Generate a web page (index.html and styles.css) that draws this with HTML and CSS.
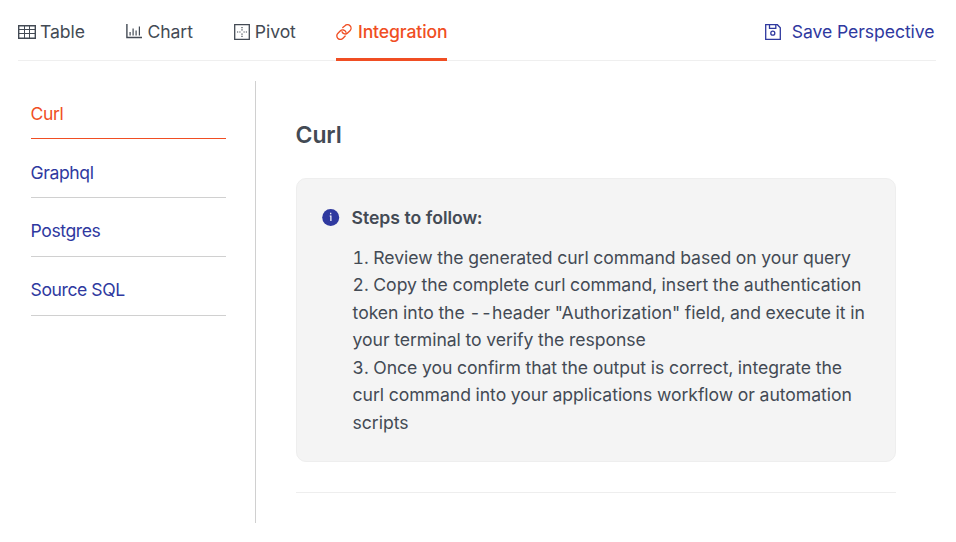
FILE: index.html
```html
<!DOCTYPE html>
<html lang="en">
<head>
<meta charset="utf-8">
<title>Integration</title>
<link rel="stylesheet" href="styles.css">
</head>
<body>
<header class="topbar">
  <nav class="tabs">
    <a class="tab tab-table"><svg width="18" height="14" viewBox="0 0 18 14" fill="none" stroke="currentColor"><path stroke-width="1.4" d="M.7.7h16.6v12.6H.7z"/><path d="M1 4.5h16M1 8.5h16M6.5 1v12M11.5 1v12"/></svg><span>Table</span></a>
    <a class="tab tab-chart"><svg width="16" height="15" viewBox="0 0 16 15" fill="none" stroke="currentColor"><path stroke-width="1.4" d="M.9 0v13.5H16"/><path stroke-width="1.2" d="M4.1 11.5V8M7.1 11.5V4.5M10.1 11.5V6.5M13.4 11.5V2.5"/></svg><span>Chart</span></a>
    <a class="tab tab-pivot"><svg width="16" height="16" viewBox="0 0 16 16" fill="none" stroke="currentColor"><path stroke-width="1.3" d="M.7.7h14.6v14.6H.7z"/><path stroke-width="1.2" d="M7.4 3.6h1.2M7.4 5.9h1.2M7.4 10.1h1.2M7.4 12.4h1.2M3 8h1.2M5.3 8h1.2M9.5 8h1.2M11.8 8H13"/></svg><span>Pivot</span></a>
    <a class="tab tab-integration active"><svg width="16" height="16" viewBox="0 0 16 16" fill="none" stroke="currentColor" stroke-width="1.35" stroke-linecap="round"><path d="M6.8 3.5 9 1.7a3.5 3.5 0 0 1 5 5L11.6 9a3.4 3.4 0 0 1-5.6-1.2M9.2 12.1 7 14.3a3.5 3.5 0 0 1-5.2-4.9L4.2 7A3.5 3.5 0 0 1 10 8.2"/></svg><span>Integration</span></a>
  </nav>
  <a class="save"><svg width="16" height="16" viewBox="0 0 16 16" fill="none" stroke="currentColor" stroke-width="1.3"><path d="M.7.7h11.7l2.9 3v11.6H.7zM4.5.7v3.6h6.3V.7"/><circle cx="7.8" cy="9.2" r="2"/></svg><span>Save Perspective</span></a>
</header>
<main class="layout">
  <nav class="sidebar">
    <a class="item selected">Curl</a>
    <a class="item second">Graphql</a>
    <a class="item">Postgres</a>
    <a class="item">Source SQL</a>
  </nav>
  <section class="content">
    <h1>Curl</h1>
    <div class="steps">
      <svg class="info" width="18" height="18" viewBox="0 0 18 18"><circle cx="8.7" cy="9.5" r="8.5" fill="#2f399f"/><path d="M7.7 8h1.2v5M8.7 4.8v1.4" fill="none" stroke="#fff" stroke-width="1.2"/></svg>
      <div>
        <h2>Steps to follow:</h2>
        <div class="step-list">
          <div>1. Review the generated curl command based on your query</div>
          <div>2. Copy the complete curl command, insert the authentication<br>token into the --header "Authorization" field, and execute it in<br>your terminal to verify the response</div>
          <div>3. Once you confirm that the output is correct, integrate the<br>curl command into your applications workflow or automation<br>scripts</div>
        </div>
      </div>
    </div>
    <hr>
  </section>
</main>
</body>
</html>
```
FILE: styles.css
```css
* { box-sizing: border-box; }
body {
  margin: 0;
  padding: 0 20px 0 18px;
  background: #fff;
  color: #434a54;
  font: 17.6px/27.5px Inter, "Liberation Sans", sans-serif;
  font-variant-numeric: tabular-nums;
  letter-spacing: -0.08px;
}
.topbar {
  display: flex;
  justify-content: space-between;
  height: 61px;
  border-bottom: 1px solid #efefef;
}
.tabs { display: flex; gap: 41px; }
.tab, .save {
  display: flex;
  align-items: center;
  gap: 5px;
  height: 61px;
  padding-top: 5px;
  white-space: nowrap;
  border-bottom: 3px solid transparent;
}
.tab svg, .save svg { flex: none; }
.tab-table { gap: 4px; }
.tab-chart svg { margin-right: 0.6px; }
.tab-integration { margin-left: -0.6px; font-weight: 500; letter-spacing: -0.12px; gap: 5.8px; }
.tab.active { color: #f04e23; border-bottom-color: #f04e23; }
.save { gap: 10.5px; padding-right: 1.5px; color: #2f399f; letter-spacing: -0.06px; }
.save svg { margin-left: 1px; }
.layout { display: flex; margin-top: 20px; height: 442px; }
.sidebar {
  width: 238px;
  padding: 0 29px 0 12.6px;
  border-right: 1px solid #d0d0d0;
  letter-spacing: -0.42px;
}
.item {
  display: block;
  height: 59px;
  padding-top: 19px;
  color: #2f399f;
  border-bottom: 1px solid #d0d0d0;
}
.item.second { padding-top: 20px; }
.item.selected { height: 58px; color: #f04e23; border-bottom-color: #f04e23; }
.content { width: 640px; padding: 39px 0 0 40px; }
h1 { margin: 0 0 27px -0.4px; font-size: 23px; line-height: 31px; font-weight: 600; letter-spacing: -0.15px; }
.steps {
  display: flex;
  gap: 11.5px;
  height: 284px;
  padding: 25px 0 0 25px;
  background: #f4f4f4;
  border: 1px solid #eee;
  border-radius: 10px;
}
.info { flex: none; margin-top: 4px; }
h2 { margin: 0 0 12.5px; font-size: 17.6px; line-height: 27px; font-weight: 600; letter-spacing: -0.04px; }
.step-list {
  padding-left: 1.1px;
  white-space: nowrap;
  letter-spacing: -0.045px;
}
hr { margin: 30px 0 0; border: 0; border-top: 1px solid #eee; }
```
